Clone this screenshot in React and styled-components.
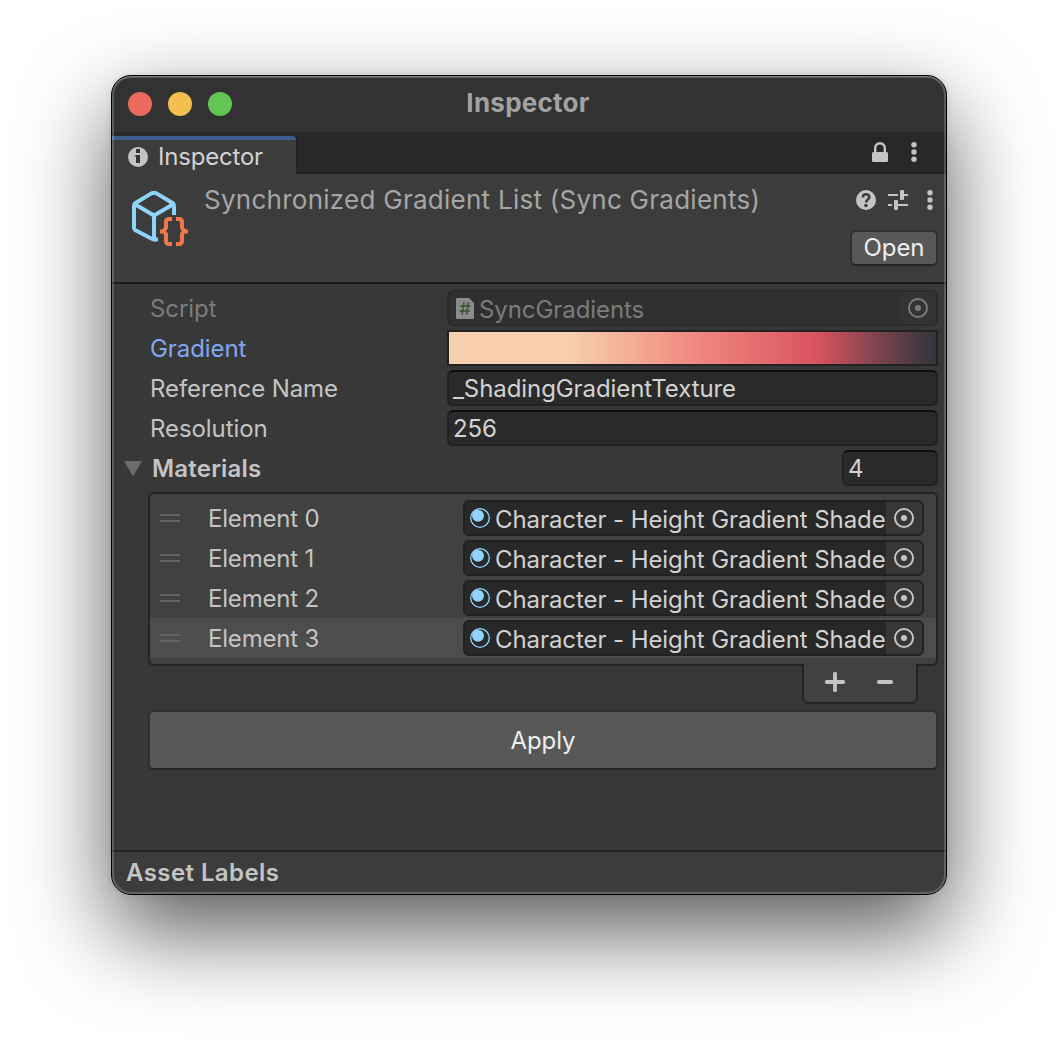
import React from "react";
import styled, { createGlobalStyle } from "styled-components";

const GlobalStyle = createGlobalStyle`
  * { box-sizing: border-box; }
  body { margin: 0; background: #fff; }
`;

const Page = styled.main`
  height: 1042px;
  overflow: hidden;
  padding: 75px 111px 0;
  font-family: Inter, "Liberation Sans", sans-serif;
  font-size: 24px;
  line-height: 36px;
  letter-spacing: -0.08px;
  color: #c8c8c8;
`;

const Window = styled.section`
  position: relative;
  display: flex;
  flex-direction: column;
  width: 836px;
  height: 820px;
  border: 1px solid #000;
  border-radius: 20px;
  overflow: hidden;
  background: #383838;
  &::after {
    content: "";
    position: absolute;
    inset: 0;
    border-radius: 19px;
    box-shadow: inset 0 0 0 2px rgba(255, 255, 255, 0.2), inset 0 1px 0 rgba(255, 255, 255, 0.2);
    pointer-events: none;
  }
`;

const Shadow = styled.div`
  width: 836px;
  border-radius: 20px;
  box-shadow: 0 36px 90px rgba(0, 0, 0, 0.66), 0 0 6px rgba(0, 0, 0, 0.1);
`;

const TitleBar = styled.header`
  display: grid;
  grid-template-columns: 130px 1fr 130px;
  align-items: center;
  flex: none;
  height: 56px;
  padding: 0 17px 0 16px;
  background: #323232;
`;

const Lights = styled.div`
  display: flex;
  gap: 16px;
`;

const Light = styled.i`
  width: 24px;
  height: 24px;
  border-radius: 50%;
  background: ${(p) => p.$color};
`;

const Title = styled.h1`
  margin: 0 1px 2px 0;
  text-align: center;
  font-size: 26px;
  font-weight: 700;
  letter-spacing: 0.25px;
  color: #a2a2a2;
`;

const TabBar = styled.nav`
  display: flex;
  flex: none;
  height: 42px;
  padding-top: 4px;
  background: linear-gradient(#282828 40px, #232323 40px);
`;

const Tab = styled.div`
  display: flex;
  align-items: center;
  gap: 10px;
  width: 184px;
  padding-left: 16px;
  border-top: 4px solid #3a5f8d;
  border-top-right-radius: 4px;
  background: #3c3c3c;
  letter-spacing: -0.2px;
  color: #d2d2d2;
`;

const TabTools = styled.div`
  display: flex;
  flex: 1;
  justify-content: flex-end;
  gap: 23px;
  padding: 6px 29px 0 0;
  border-left: 2px solid #232323;
`;

const AssetHeader = styled.div`
  display: flex;
  flex: none;
  height: 110px;
  border-bottom: 2px solid #1a1a1a;
  background: #3c3c3c;
  padding: 8px 8px 0 16px;
`;

const AssetTitle = styled.div`
  flex: 1;
  margin-left: 12px;
  color: #a6a6a6;
  font-size: 26px;
  letter-spacing: 0.26px;
`;

const AssetSide = styled.div`
  display: flex;
  flex-direction: column;
  align-items: flex-end;
  gap: 12px;
`;

const AssetTools = styled.div`
  display: grid;
  grid-template-columns: 20px 20px 6px;
  column-gap: 12px;
  width: 82px;
  padding: 8px 0 0;
  height: 36px;
  & > :last-child { margin-left: 7px; }
`;

const Button = styled.button`
  width: ${(p) => p.$width};
  height: ${(p) => p.$height};
  padding: ${(p) => p.$padding || 0};
  border: 2px solid #303030;
  border-bottom-color: #242424;
  border-radius: 6px;
  background: #585858;
  color: #eee;
  font: inherit;
  letter-spacing: inherit;
  line-height: 30px;
`;

const Body = styled.div`
  flex: 1;
  display: flex;
  flex-direction: column;
  padding: 6px 8px 0 36px;
`;

const Row = styled.div`
  display: flex;
  align-items: center;
  height: 36px;
  margin-bottom: 4px;
`;

const Label = styled.label`
  width: 299px;
  padding: 2px 0 0 2px;
  color: ${(p) => p.$color || "#c4c4c4"};
`;

const Field = styled.div`
  flex: 1;
  height: 36px;
  padding-left: 4px;
  border: 2px solid #212121;
  border-top-color: #0d0d0d;
  border-radius: 6px;
  background: #2a2a2a;
  color: #d2d2d2;
  line-height: 34px;
`;

const CountField = styled(Field)`
  flex: none;
  width: 96px;
  margin-left: auto;
`;

const ObjectField = styled.div`
  display: flex;
  align-items: center;
  flex: 1;
  min-width: 0;
  height: 36px;
  border: 2px solid ${(p) => (p.$disabled ? "#2a2a2a" : "#212121")};
  border-radius: 6px;
  background: ${(p) => (p.$disabled ? "#303030" : "#282828")};
  color: ${(p) => (p.$disabled ? "#7c7c7c" : "#d2d2d2")};
  padding-left: ${(p) => (p.$disabled ? "7px" : "5px")};
`;

const ObjectName = styled.span`
  flex: 1;
  min-width: 0;
  white-space: nowrap;
  padding-top: 3px;
  margin-left: 5px;
`;

const PickerBox = styled.span`
  display: flex;
  align-items: center;
  justify-content: center;
  flex: none;
  width: 36px;
  height: 32px;
  border-radius: 0 4px 4px 0;
  background: ${(p) => (p.$disabled ? "#333" : "#373737")};
  color: ${(p) => (p.$disabled ? "#7c7c7c" : "#c4c4c4")};
`;

const GradientField = styled.div`
  flex: 1;
  height: 36px;
  border: 2px solid #212121;
  background: linear-gradient(
    90deg,
    #f7d0b0 0%,
    #f7ceae 25%,
    #f08a80 50%,
    #da5460 75%,
    #2d363d 100%
  );
`;

const Foldout = styled.div`
  display: flex;
  align-items: center;
  margin-left: -24px;
  gap: 10px;
  font-weight: 600;
  letter-spacing: 0.2px;
  color: #c4c4c4;
`;

const FoldoutText = styled.span`
  padding-top: 2px;
`;

const List = styled.div`
  flex: none;
  height: 174px;
  margin-top: 2px;
  padding: 4px 0;
  border: 2px solid #242424;
  border-radius: 6px;
  background: #414141;
`;

const ListRow = styled.div`
  display: flex;
  align-items: center;
  height: 40px;
  padding: 0 12px 0 10px;
  background: ${(p) => (p.$selected ? "#4d4d4d" : "transparent")};
`;

const Handle = styled.span`
  width: 20px;
  height: 8px;
  border: solid #626262;
  border-width: 2px 0;
`;

const ListLabel = styled.span`
  width: 283px;
  padding: 2px 0 0 28px;
  letter-spacing: -0.2px;
  color: #c4c4c4;
`;

const ListFooter = styled.div`
  display: flex;
  flex: none;
  align-self: flex-end;
  width: 116px;
  height: 40px;
  margin: -2px 20px 6px 0;
  padding: 8px 0 0 21px;
  gap: 25px;
  border: 2px solid #242424;
  border-top: 0;
  border-radius: 0 0 6px 6px;
  background: #414141;
`;

const AssetLabels = styled.footer`
  flex: none;
  height: 44px;
  padding: 3px 0 0 14px;
  border-top: 2px solid #242424;
  background: #3c3c3c;
  font-weight: 600;
  letter-spacing: 0.42px;
  color: #c4c4c4;
`;

const Svg = styled.svg`
  display: block;
  flex: none;
`;

const InfoIcon = () => (
  <Svg width="20" height="20" viewBox="0 0 20 20">
    <circle cx="10" cy="10" r="10" fill="#c4c4c4" />
    <path d="M8 2h4v4H8zM8 8h4v8H8z" fill="#333" />
    <path d="M6 8h2v2H6z" fill="#8a8a8a" />
  </Svg>
);

const LockIcon = () => (
  <Svg width="16" height="20" viewBox="0 0 16 20">
    <path d="M3.2 11V6a4.8 4.8 0 0 1 9.600 0v5" fill="none" stroke="#c4c4c4" strokeWidth="2.400" />
    <rect y="10" width="16" height="10" rx="1.500" fill="#c4c4c4" />
  </Svg>
);

const KebabIcon = () => (
  <Svg width="6" height="20" viewBox="0 0 6 20">
    <circle cx="3" cy="2.700" r="2.700" fill="#c4c4c4" />
    <circle cx="3" cy="10" r="2.700" fill="#c4c4c4" />
    <circle cx="3" cy="17.300" r="2.700" fill="#c4c4c4" />
  </Svg>
);

const HelpIcon = () => (
  <Svg width="20" height="20" viewBox="0 0 20 20">
    <circle cx="10" cy="10" r="10" fill="#c4c4c4" />
    <path d="M6.800 7.600C6.800 3 13.300 3.300 13.300 7c0 2.500-3.200 2.500-3.200 5.400" fill="none" stroke="#3c3c3c" strokeWidth="2.600" />
    <circle cx="10" cy="15.500" r="1.800" fill="#3c3c3c" />
  </Svg>
);

const SlidersIcon = () => (
  <Svg width="20" height="20" viewBox="0 0 20 20" fill="#c4c4c4">
    <rect y="4" width="10" height="2" />
    <rect x="12" width="4" height="10" rx="1" />
    <rect x="16" y="4" width="4" height="2" />
    <rect y="14" width="4" height="2" />
    <rect x="6" y="10" width="4" height="10" rx="1" />
    <rect x="10" y="14" width="10" height="2" />
  </Svg>
);

const AssetIcon = () => (
  <Svg width="64" height="64" viewBox="0 0 64 64" fill="none" strokeWidth="4" strokeLinejoin="round">
    <g stroke="#8fd3fb">
      <path d="M30 57.200 26 57.700 24.300 57 7.500 48.300Q6 47.300 6 45.500V24Q6 22 7.500 21L23.500 11.400Q26 10.200 28.500 11.400L44.500 21Q46 22 46 24V33" />
      <path d="M6.500 22 26 33.500 45.500 22M26 33.500V57" />
    </g>
    <g stroke="#f07848" strokeWidth="4">
      <path d="M44 37H41Q38 37 38 40V46L35.500 49 38 52V59Q38 62 41 62H44M36 49.500H32" />
      <path d="M48 37H51Q54 37 54 40V46L56.500 49 54 52V59Q54 62 51 62H48M56 49.500H60" />
    </g>
  </Svg>
);

const ScriptIcon = () => (
  <Svg width="18" height="22" viewBox="0 0 18 22">
    <path d="M1 1H13L18 6V21Q18 22 17 22H1Q0 22 0 21V2Q0 1 1 1z" fill="#8b8b8b" />
    <path d="M8 5 6 18M12.500 5 10.500 18M4 9H14.500M3.500 14H14" stroke="#34532f" strokeWidth="1.500" fill="none" />
  </Svg>
);

const MaterialIcon = () => (
  <Svg width="20" height="20" viewBox="0 0 20 20">
    <circle cx="10" cy="10" r="9.300" fill="none" stroke="#8fd3fb" strokeWidth="1.300" />
    <circle cx="8" cy="7.800" r="6" fill="#8fd3fb" />
  </Svg>
);

const PickerIcon = () => (
  <Svg width="20" height="20" viewBox="0 0 20 20">
    <circle cx="10" cy="10" r="9" fill="none" stroke="currentColor" strokeWidth="2" />
    <circle cx="10" cy="10" r="3" fill="currentColor" />
  </Svg>
);

const FoldIcon = () => (
  <Svg width="18" height="18" viewBox="0 0 18 18">
    <path d="M0 2H18L9 17.500z" fill="#6c6c6c" />
  </Svg>
);

const PlusIcon = () => (
  <Svg width="20" height="20" viewBox="0 0 20 20">
    <path d="M10 1.800V18.200M1.800 10H18.200" stroke="#c4c4c4" strokeWidth="3.800" strokeLinecap="round" />
  </Svg>
);

const MinusIcon = () => (
  <Svg width="30" height="20" viewBox="0 0 30 20">
    <path d="M8.800 10H21.200" stroke="#c4c4c4" strokeWidth="3.800" strokeLinecap="round" />
  </Svg>
);

const elements = [0, 1, 2, 3];

export default function App() {
  return (
    <Page>
      <GlobalStyle />
      <Shadow>
        <Window>
          <TitleBar>
            <Lights>
              <Light $color="#ed6a5e" />
              <Light $color="#f5bf4f" />
              <Light $color="#62c554" />
            </Lights>
            <Title>Inspector</Title>
          </TitleBar>
          <TabBar>
            <Tab>
              <InfoIcon />
              Inspector
            </Tab>
            <TabTools>
              <LockIcon />
              <KebabIcon />
            </TabTools>
          </TabBar>
          <AssetHeader>
            <AssetIcon />
            <AssetTitle>Synchronized Gradient List (Sync Gradients)</AssetTitle>
            <AssetSide>
              <AssetTools>
                <HelpIcon />
                <SlidersIcon />
                <KebabIcon />
              </AssetTools>
              <Button $width="88px" $height="36px">Open</Button>
            </AssetSide>
          </AssetHeader>
          <Body>
            <Row>
              <Label $color="#7c7c7c">Script</Label>
              <ObjectField $disabled>
                <ScriptIcon />
                <ObjectName>SyncGradients</ObjectName>
                <PickerBox $disabled>
                  <PickerIcon />
                </PickerBox>
              </ObjectField>
            </Row>
            <Row>
              <Label $color="#81a8f2">Gradient</Label>
              <GradientField />
            </Row>
            <Row>
              <Label>Reference Name</Label>
              <Field>_ShadingGradientTexture</Field>
            </Row>
            <Row>
              <Label>Resolution</Label>
              <Field>256</Field>
            </Row>
            <Row>
              <Foldout>
                <FoldIcon />
                <FoldoutText>Materials</FoldoutText>
              </Foldout>
              <CountField>4</CountField>
            </Row>
            <List>
              {elements.map((n) => (
                <ListRow key={n} $selected={n === 3}>
                  <Handle />
                  <ListLabel>Element {n}</ListLabel>
                  <ObjectField>
                    <MaterialIcon />
                    <ObjectName>Character - Height Gradient Shade</ObjectName>
                    <PickerBox>
                      <PickerIcon />
                    </PickerBox>
                  </ObjectField>
                </ListRow>
              ))}
            </List>
            <ListFooter>
              <PlusIcon />
              <MinusIcon />
            </ListFooter>
            <Button $width="100%" $height="60px" $padding="2px 0 0">Apply</Button>
          </Body>
          <AssetLabels>Asset Labels</AssetLabels>
        </Window>
      </Shadow>
    </Page>
  );
}
